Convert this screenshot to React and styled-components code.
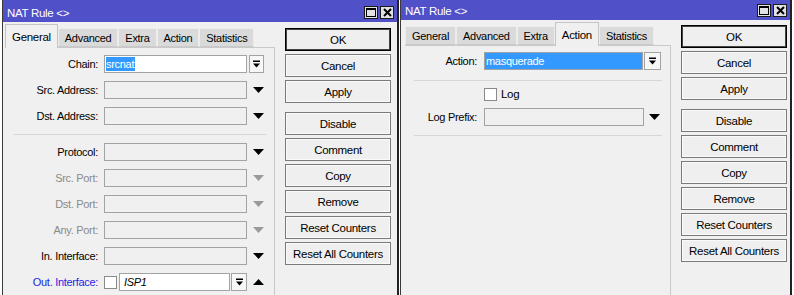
import React from "react";
import styled, { createGlobalStyle } from "styled-components";

const GlobalStyle = createGlobalStyle`
  body {
    margin: 0;
    background: #fff;
    font-family: "Liberation Sans", Arial, sans-serif;
  }
`;

const DownTriangle = ({ color = "#000" }) => (
  <svg width="11" height="6" viewBox="0 0 11 6">
    <path d="M0 0 L11 0 L5.5 6 Z" fill={color} />
  </svg>
);

const UpTriangle = ({ color = "#000" }) => (
  <svg width="11" height="6" viewBox="0 0 11 6">
    <path d="M0 6 L11 6 L5.5 0 Z" fill={color} />
  </svg>
);

const DropIcon = () => (
  <svg width="9" height="9" viewBox="0 0 9 9">
    <rect x="1" y="0.5" width="7" height="1.5" fill="#000" />
    <path d="M1 3.5 H8 L4.5 7.5 Z" fill="#000" />
  </svg>
);

const MaxIcon = () => (
  <svg width="10" height="9" viewBox="0 0 10 9">
    <rect x="0.5" y="0.5" width="9" height="8" fill="none" stroke="#000" />
    <rect x="0" y="0" width="10" height="2" fill="#000" />
  </svg>
);

const CloseIcon = () => (
  <svg width="9" height="9" viewBox="0 0 9 9">
    <path d="M1 1 L8 8 M8 1 L1 8" stroke="#000" strokeWidth="2" />
  </svg>
);

const NatWindow = ({ width, mainWidth, padLeft, titleHeight, titlePad, buttonPad, activeTab, tabs, panelPad, children }) => (
  <Window $w={width}>
    <TitleBar $h={titleHeight} $pt={titlePad}>
      <TitleText>NAT Rule &lt;&gt;</TitleText>
      <TitleButtons>
        <TitleButton><MaxIcon /></TitleButton>
        <TitleButton><CloseIcon /></TitleButton>
      </TitleButtons>
    </TitleBar>
    <Body>
      <Main $w={mainWidth} $pl={padLeft}>
        <TabStrip>
          {tabs.map((t) => (
            <Tab key={t} $active={t === activeTab}>{t}</Tab>
          ))}
        </TabStrip>
        <Panel $pad={panelPad}>{children}</Panel>
      </Main>
      <ButtonColumn $pt={buttonPad}>
        <ActionButton $default>OK</ActionButton>
        <ActionButton>Cancel</ActionButton>
        <ActionButton>Apply</ActionButton>
        <ActionButton $spaced>Disable</ActionButton>
        <ActionButton>Comment</ActionButton>
        <ActionButton>Copy</ActionButton>
        <ActionButton>Remove</ActionButton>
        <ActionButton>Reset Counters</ActionButton>
        <ActionButton>Reset All Counters</ActionButton>
      </ButtonColumn>
    </Body>
  </Window>
);

const TABS = ["General", "Advanced", "Extra", "Action", "Statistics"];

const portRows = [
  { label: "Protocol:", disabled: false },
  { label: "Src. Port:", disabled: true },
  { label: "Dst. Port:", disabled: true },
  { label: "Any. Port:", disabled: true },
  { label: "In. Interface:", disabled: false },
];

const App = () => (
  <>
    <GlobalStyle />
    <Desktop>
      <NatWindow
        width={397}
        mainWidth={270}
        padLeft={2}
        titleHeight={22}
        titlePad={3}
        buttonPad={6}
        activeTab="General"
        tabs={TABS}
        panelPad={7}
      >
        <Row>
          <Label $w={93}>Chain:</Label>
          <Field $w={143}>
            <Selected>srcnat</Selected>
          </Field>
          <DropButton $w={15} $ml={2}><DropIcon /></DropButton>
        </Row>
        <Row $top={8}>
          <Label $w={93}>Src. Address:</Label>
          <Field $w={143} $disabled />
          <ArrowSlot $w={22}><DownTriangle /></ArrowSlot>
        </Row>
        <Row $top={8}>
          <Label $w={93}>Dst. Address:</Label>
          <Field $w={143} $disabled />
          <ArrowSlot $w={22}><DownTriangle /></ArrowSlot>
        </Row>
        <Separator $top={9} />
        {portRows.map((r) => (
          <Row key={r.label} $top={8}>
            <Label $w={93} $tone={r.disabled ? "muted" : "normal"}>{r.label}</Label>
            <Field $w={143} $disabled />
            <ArrowSlot $w={22}>
              <DownTriangle color={r.disabled ? "#9a9a9a" : "#000"} />
            </ArrowSlot>
          </Row>
        ))}
        <Row $top={8}>
          <Label $w={93} $tone="link">Out. Interface:</Label>
          <Checkbox $mr={2} />
          <Field $w={111}>
            <Italic>ISP1</Italic>
          </Field>
          <DropButton $w={16} $ml={1}><DropIcon /></DropButton>
          <ArrowSlot $w={22}><UpTriangle /></ArrowSlot>
        </Row>
      </NatWindow>

      <NatWindow
        width={392}
        mainWidth={266}
        padLeft={4}
        titleHeight={20}
        titlePad={1}
        buttonPad={5}
        activeTab="Action"
        tabs={TABS}
        panelPad={6}
      >
        <Row>
          <Label $w={72} $gap={7}>Action:</Label>
          <Field $w={159} $highlight>masquerade</Field>
          <DropButton $w={17} $ml={1}><DropIcon /></DropButton>
        </Row>
        <Separator $top={10} />
        <Row $top={4}>
          <Label $w={72} $gap={7} />
          <Checkbox $mr={4} />
          <CheckText>Log</CheckText>
        </Row>
        <Row $top={5}>
          <Label $w={72} $gap={7}>Log Prefix:</Label>
          <Field $w={160} $disabled />
          <ArrowSlot $w={20}><DownTriangle /></ArrowSlot>
        </Row>
        <Separator $top={9} />
      </NatWindow>
    </Desktop>
  </>
);

export default App;

const Desktop = styled.div`
  display: flex;
  gap: 1px;
  height: 295px;
  padding-left: 2px;
  overflow: hidden;
  font-size: 11px;
  letter-spacing: -0.3px;
  color: #000;
`;

const Window = styled.div`
  width: ${(p) => p.$w}px;
  flex-shrink: 0;
  box-sizing: border-box;
  display: flex;
  flex-direction: column;
  background: #f0f0f0;
  border-left: 1px solid #3a3a3a;
  border-right: 2px solid #222;
`;

const TitleBar = styled.div`
  height: ${(p) => p.$h}px;
  box-sizing: border-box;
  padding: ${(p) => p.$pt}px 3px 0 4px;
  background: #5050c8;
  color: #fff;
  display: flex;
  align-items: center;
`;

const TitleText = styled.span`
  font-size: 11.5px;
`;

const TitleButtons = styled.div`
  margin-left: auto;
  align-self: flex-end;
  margin-bottom: 3px;
  display: flex;
  gap: 2px;
`;

const TitleButton = styled.span`
  width: 14px;
  height: 13px;
  box-sizing: border-box;
  background: #e2e2e2;
  border: 1px solid #1a1a1a;
  display: flex;
  align-items: center;
  justify-content: center;
`;

const Body = styled.div`
  flex: 1;
  display: flex;
  min-height: 0;
`;

const Main = styled.div`
  width: ${(p) => p.$w}px;
  flex-shrink: 0;
  padding-left: ${(p) => p.$pl}px;
  padding-top: 2px;
  display: flex;
  flex-direction: column;
`;

const TabStrip = styled.div`
  height: 23px;
  display: flex;
  align-items: flex-end;
`;

const Tab = styled.div`
  position: relative;
  z-index: ${(p) => (p.$active ? 1 : 0)};
  height: ${(p) => (p.$active ? 24 : 19)}px;
  margin-bottom: ${(p) => (p.$active ? -1 : 0)}px;
  box-sizing: border-box;
  padding: 0 6px;
  display: flex;
  align-items: center;
  background: ${(p) => (p.$active ? "#f0f0f0" : "#dadada")};
  border: 1px solid ${(p) => (p.$active ? "#c4c4c4" : "#ededed")};
  border-bottom: ${(p) => (p.$active ? "none" : "1px solid #c9c9c9")};
  font-size: ${(p) => (p.$active ? 11.5 : 11)}px;
`;

const Panel = styled.div`
  flex: 1;
  border-top: 1px solid #c9c9c9;
  border-right: 1px solid #c9c9c9;
  padding-top: ${(p) => p.$pad}px;
`;

const Row = styled.div`
  display: flex;
  align-items: center;
  height: 18px;
  margin-top: ${(p) => p.$top || 0}px;
`;

const toneColor = { normal: "#000", muted: "#8a8a8a", link: "#1f1fe0" };

const Label = styled.span`
  width: ${(p) => p.$w}px;
  flex-shrink: 0;
  margin-right: ${(p) => p.$gap || 6}px;
  text-align: right;
  white-space: nowrap;
  color: ${(p) => toneColor[p.$tone || "normal"]};
`;

const Field = styled.div`
  width: ${(p) => p.$w}px;
  flex-shrink: 0;
  height: 18px;
  box-sizing: border-box;
  padding: 0 1px;
  display: flex;
  align-items: center;
  border: 1px solid #a3a3a3;
  background: ${(p) => (p.$highlight ? "#3399ff" : p.$disabled ? "#f0f0f0" : "#fff")};
  color: ${(p) => (p.$highlight ? "#fff" : "#000")};
`;

const Selected = styled.span`
  background: #3399ff;
  color: #fff;
  line-height: 14px;
  padding-right: 1px;
`;

const Italic = styled.span`
  font-style: italic;
  padding-left: 3px;
`;

const DropButton = styled.span`
  width: ${(p) => p.$w}px;
  flex-shrink: 0;
  height: 18px;
  margin-left: ${(p) => p.$ml}px;
  box-sizing: border-box;
  border: 1px solid #a3a3a3;
  background: #f7f7f7;
  display: flex;
  align-items: center;
  justify-content: center;
`;

const ArrowSlot = styled.span`
  width: ${(p) => p.$w}px;
  display: flex;
  justify-content: center;
`;

const Checkbox = styled.span`
  width: 13px;
  height: 13px;
  flex-shrink: 0;
  box-sizing: border-box;
  margin-right: ${(p) => p.$mr}px;
  border: 1px solid #8a8a8a;
  background: #fff;
`;

const CheckText = styled.span`
  font-size: 11.5px;
`;

const Separator = styled.div`
  height: 1px;
  margin: ${(p) => p.$top}px 8px 0 9px;
  background: #d6d6d6;
`;

const ButtonColumn = styled.div`
  width: 106px;
  margin-left: 10px;
  padding-top: ${(p) => p.$pt}px;
  display: flex;
  flex-direction: column;
  gap: 3px;
`;

const ActionButton = styled.div`
  height: 23px;
  box-sizing: border-box;
  margin-top: ${(p) => (p.$spaced ? 6 : 0)}px;
  display: flex;
  align-items: center;
  justify-content: center;
  background: #efefef;
  border: 1px solid ${(p) => (p.$default ? "#000" : "#7a7a7a")};
  box-shadow: ${(p) => (p.$default ? "inset 0 0 0 1px #444" : "inset 0 0 0 1px #fafafa")};
  font-size: 11.5px;
`;
